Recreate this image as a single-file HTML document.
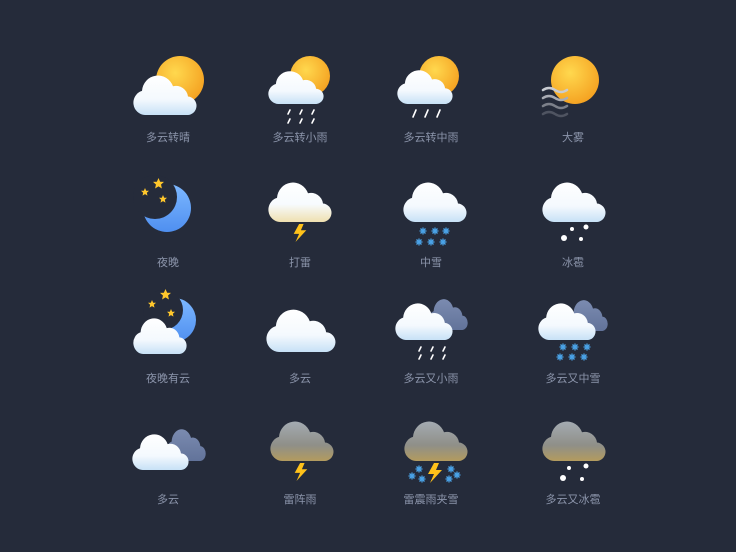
<!DOCTYPE html>
<html><head><meta charset="utf-8"><style>
html,body{margin:0;padding:0;background:#252b3a;}
.l{font-family:"Liberation Sans","Noto Sans CJK SC",sans-serif;font-size:11px;fill:#8b94aa;text-anchor:middle}
</style></head><body>
<svg width="736" height="552" viewBox="0 0 736 552" xmlns="http://www.w3.org/2000/svg" style="display:block">
<defs>
<radialGradient id="sun" cx="40%" cy="35%" r="70%"><stop offset="0" stop-color="#ffd84e"/><stop offset="1" stop-color="#f4a020"/></radialGradient>
<linearGradient id="gw" x1="0" y1="0" x2="0" y2="1"><stop offset="0" stop-color="#ffffff"/><stop offset=".6" stop-color="#f4f9fe"/><stop offset="1" stop-color="#c7e1f6"/></linearGradient>
<linearGradient id="gy" x1="0" y1="0" x2="0" y2="1"><stop offset="0" stop-color="#ffffff"/><stop offset=".55" stop-color="#f7fbfe"/><stop offset="1" stop-color="#efe0b0"/></linearGradient>
<linearGradient id="gs" x1="0" y1="0" x2="0" y2="1"><stop offset="0" stop-color="#a4abb2"/><stop offset=".6" stop-color="#8f8f88"/><stop offset="1" stop-color="#b39b5e"/></linearGradient>
<linearGradient id="gb" x1="0" y1="0" x2="0" y2="1"><stop offset="0" stop-color="#7b8bb0"/><stop offset="1" stop-color="#62739a"/></linearGradient>
<linearGradient id="moon" x1="0" y1="0" x2="0" y2="1"><stop offset="0" stop-color="#7db8ff"/><stop offset="1" stop-color="#4f8ff0"/></linearGradient>
<symbol id="c" viewBox="0 0 64 40" preserveAspectRatio="none"><path d="M12 40A12 12 0 0 1 9 16.5A16 16 0 0 1 40 12A12 12 0 0 1 55 22A9 9 0 0 1 54 40Z"/></symbol>
<symbol id="st" viewBox="-5 -5 10 10"><path d="M0-5L1.5-1.6L5-1.5L2.3 0.9L3.1 4.5L0 2.6L-3.1 4.5L-2.3 0.9L-5-1.5L-1.5-1.6Z" fill="#ffc72c"/></symbol>
<symbol id="sn" viewBox="-4 -4 8 8"><g stroke="#4aa3e8" stroke-width="1.3"><path d="M-3.5 0H3.5M0-3.5V3.5M-2.5-2.5L2.5 2.5M-2.5 2.5L2.5-2.5"/></g></symbol>
<symbol id="bolt" viewBox="0 0 20 20"><path d="M9 0L3 11H9L5 20L17 7H11L14 0Z" fill="#ffc21a"/></symbol>
</defs>

<!-- 1 -->
<circle cx="180" cy="80" r="24" fill="url(#sun)"/>
<use href="#c" x="133" y="74" width="64" height="41" fill="url(#gw)"/>
<text class="l" x="168" y="141">多云转晴</text>
<!-- 2 -->
<circle cx="310" cy="76" r="20" fill="url(#sun)"/>
<use href="#c" x="268" y="70" width="56" height="34" fill="url(#gw)"/>
<g stroke="#fff" stroke-width="1.6" stroke-linecap="round"><path d="M290 110l-2 4M302 110l-2 4M314 110l-2 4M290 119l-2 4M302 119l-2 4M314 119l-2 4"/></g>
<text class="l" x="300" y="141">多云转小雨</text>
<!-- 3 -->
<circle cx="439" cy="76" r="20" fill="url(#sun)"/>
<use href="#c" x="397" y="69" width="56" height="35" fill="url(#gw)"/>
<g stroke="#fff" stroke-width="1.6" stroke-linecap="round"><path d="M416 110l-3 7M428 110l-3 7M440 110l-3 7"/></g>
<text class="l" x="431" y="141">多云转中雨</text>
<!-- 4 -->
<circle cx="575" cy="80" r="24" fill="url(#sun)"/>
<g fill="none" stroke-width="2.5" stroke-linecap="round"><path d="M543 90q6-4 12 0t12 0" stroke="#c9ccd2"/><path d="M543 98q6-4 12 0t12 0" stroke="#a9acb4"/><path d="M543 106q6-4 12 0t12 0" stroke="#7c808a"/><path d="M543 114q6-4 12 0t12 0" stroke="#4f5461"/></g>
<text class="l" x="573" y="141">大雾</text>
<!-- 5 -->
<circle cx="167" cy="208" r="24" fill="url(#moon)"/>
<circle cx="155" cy="197" r="22" fill="#252b3a"/>
<use href="#st" x="153" y="178" width="11" height="11"/>
<use href="#st" x="141" y="188" width="8" height="8"/>
<use href="#st" x="159" y="195" width="8" height="8"/>
<text class="l" x="168" y="266">夜晚</text>
<!-- 6 -->
<use href="#c" x="268" y="181" width="64" height="41" fill="url(#gy)"/>
<use href="#bolt" x="291" y="224" width="18" height="18"/>
<text class="l" x="300" y="266">打雷</text>
<!-- 7 -->
<use href="#c" x="403" y="181" width="64" height="41" fill="url(#gw)"/>
<use href="#sn" x="419" y="227" width="8" height="8"/><use href="#sn" x="431" y="227" width="8" height="8"/><use href="#sn" x="442" y="227" width="8" height="8"/>
<use href="#sn" x="415" y="238" width="8" height="8"/><use href="#sn" x="427" y="238" width="8" height="8"/><use href="#sn" x="439" y="238" width="8" height="8"/>
<text class="l" x="431" y="266">中雪</text>
<!-- 8 -->
<use href="#c" x="542" y="181" width="64" height="41" fill="url(#gw)"/>
<circle cx="572" cy="229" r="2" fill="#fff"/><circle cx="586" cy="227" r="2.5" fill="#fff"/><circle cx="564" cy="238" r="3" fill="#fff"/><circle cx="581" cy="239" r="2" fill="#fff"/>
<text class="l" x="573" y="266">冰雹</text>
<!-- 9 -->
<circle cx="174" cy="320" r="22" fill="url(#moon)"/>
<circle cx="163" cy="310" r="20" fill="#252b3a"/>
<use href="#st" x="160" y="289" width="11" height="11"/>
<use href="#st" x="148" y="300" width="8" height="8"/>
<use href="#st" x="167" y="309" width="8" height="8"/>
<use href="#c" x="133" y="317" width="54" height="37" fill="url(#gw)"/>
<text class="l" x="168" y="382">夜晚有云</text>
<!-- 10 -->
<use href="#c" x="266" y="308" width="70" height="44" fill="url(#gw)"/>
<text class="l" x="300" y="382">多云</text>
<!-- 11 -->
<use href="#c" x="428" y="298" width="40" height="32" fill="url(#gb)"/>
<use href="#c" x="395" y="302" width="58" height="38" fill="url(#gw)"/>
<g stroke="#fff" stroke-width="1.6" stroke-linecap="round"><path d="M421 347l-2 4M433 347l-2 4M445 347l-2 4M421 355l-2 4M433 355l-2 4M445 355l-2 4"/></g>
<text class="l" x="431" y="382">多云又小雨</text>
<!-- 12 -->
<use href="#c" x="568" y="299" width="40" height="32" fill="url(#gb)"/>
<use href="#c" x="538" y="302" width="58" height="38" fill="url(#gw)"/>
<use href="#sn" x="559" y="343" width="8" height="8"/><use href="#sn" x="571" y="343" width="8" height="8"/><use href="#sn" x="583" y="343" width="8" height="8"/>
<use href="#sn" x="556" y="353" width="8" height="8"/><use href="#sn" x="568" y="353" width="8" height="8"/><use href="#sn" x="580" y="353" width="8" height="8"/>
<text class="l" x="573" y="382">多云又中雪</text>
<!-- 13 -->
<use href="#c" x="166" y="428" width="40" height="33" fill="url(#gb)"/>
<use href="#c" x="132" y="433" width="57" height="37" fill="url(#gw)"/>
<text class="l" x="168" y="503">多云</text>
<!-- 14 -->
<use href="#c" x="270" y="420" width="64" height="41" fill="url(#gs)"/>
<use href="#bolt" x="292" y="463" width="18" height="18"/>
<text class="l" x="300" y="503">雷阵雨</text>
<!-- 15 -->
<use href="#c" x="404" y="420" width="64" height="41" fill="url(#gs)"/>
<use href="#bolt" x="425" y="463" width="20" height="20"/>
<use href="#sn" x="415" y="465" width="8" height="8"/><use href="#sn" x="408" y="472" width="8" height="8"/><use href="#sn" x="418" y="475" width="8" height="8"/>
<use href="#sn" x="447" y="465" width="8" height="8"/><use href="#sn" x="453" y="471" width="8" height="8"/><use href="#sn" x="445" y="475" width="8" height="8"/>
<text class="l" x="431" y="503">雷震雨夹雪</text>
<!-- 16 -->
<use href="#c" x="542" y="420" width="64" height="41" fill="url(#gs)"/>
<circle cx="569" cy="468" r="2" fill="#fff"/><circle cx="586" cy="466" r="2.5" fill="#fff"/><circle cx="563" cy="478" r="3" fill="#fff"/><circle cx="582" cy="479" r="2" fill="#fff"/>
<text class="l" x="573" y="503">多云又冰雹</text>
</svg>
</body></html>
